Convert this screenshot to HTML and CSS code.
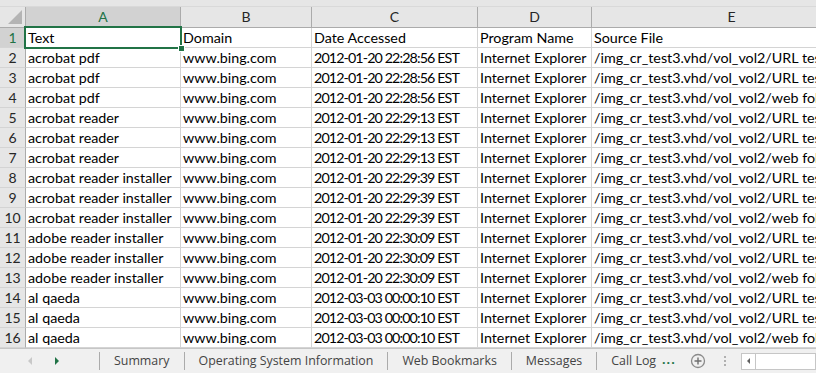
FILE: index.html
```html
<!DOCTYPE html>
<html lang="en">
<head>
  <meta charset="UTF-8">
  <title>URL history - sheet</title>
  <link rel="stylesheet" href="styles.css">
</head>
<body>

  <div class="sheet">
    <div class="row head">
      <div class="corner"><span class="tri"></span></div>
      <div class="colhead sel">A</div>
      <div class="colhead">B</div>
      <div class="colhead">C</div>
      <div class="colhead">D</div>
      <div class="colhead">E</div>
    </div>

    <div class="row">
      <div class="rowhead sel">1</div>
      <div class="cell active">Text<span class="selbox"></span><span class="handle"></span></div>
      <div class="cell">Domain</div>
      <div class="cell">Date Accessed</div>
      <div class="cell">Program Name</div>
      <div class="cell">Source File</div>
    </div>
    <div class="row">
      <div class="rowhead">2</div>
      <div class="cell">acrobat pdf</div>
      <div class="cell">www.bing.com</div>
      <div class="cell date">2012-01-20 22:28:56 EST</div>
      <div class="cell">Internet Explorer</div>
      <div class="cell">/img_cr_test3.vhd/vol_vol2/URL test.txt</div>
    </div>
    <div class="row">
      <div class="rowhead">3</div>
      <div class="cell">acrobat pdf</div>
      <div class="cell">www.bing.com</div>
      <div class="cell date">2012-01-20 22:28:56 EST</div>
      <div class="cell">Internet Explorer</div>
      <div class="cell">/img_cr_test3.vhd/vol_vol2/URL test.txt</div>
    </div>
    <div class="row">
      <div class="rowhead">4</div>
      <div class="cell">acrobat pdf</div>
      <div class="cell">www.bing.com</div>
      <div class="cell date">2012-01-20 22:28:56 EST</div>
      <div class="cell">Internet Explorer</div>
      <div class="cell">/img_cr_test3.vhd/vol_vol2/web folder</div>
    </div>
    <div class="row">
      <div class="rowhead">5</div>
      <div class="cell">acrobat reader</div>
      <div class="cell">www.bing.com</div>
      <div class="cell date">2012-01-20 22:29:13 EST</div>
      <div class="cell">Internet Explorer</div>
      <div class="cell">/img_cr_test3.vhd/vol_vol2/URL test.txt</div>
    </div>
    <div class="row">
      <div class="rowhead">6</div>
      <div class="cell">acrobat reader</div>
      <div class="cell">www.bing.com</div>
      <div class="cell date">2012-01-20 22:29:13 EST</div>
      <div class="cell">Internet Explorer</div>
      <div class="cell">/img_cr_test3.vhd/vol_vol2/URL test.txt</div>
    </div>
    <div class="row">
      <div class="rowhead">7</div>
      <div class="cell">acrobat reader</div>
      <div class="cell">www.bing.com</div>
      <div class="cell date">2012-01-20 22:29:13 EST</div>
      <div class="cell">Internet Explorer</div>
      <div class="cell">/img_cr_test3.vhd/vol_vol2/web folder</div>
    </div>
    <div class="row">
      <div class="rowhead">8</div>
      <div class="cell">acrobat reader installer</div>
      <div class="cell">www.bing.com</div>
      <div class="cell date">2012-01-20 22:29:39 EST</div>
      <div class="cell">Internet Explorer</div>
      <div class="cell">/img_cr_test3.vhd/vol_vol2/URL test.txt</div>
    </div>
    <div class="row">
      <div class="rowhead">9</div>
      <div class="cell">acrobat reader installer</div>
      <div class="cell">www.bing.com</div>
      <div class="cell date">2012-01-20 22:29:39 EST</div>
      <div class="cell">Internet Explorer</div>
      <div class="cell">/img_cr_test3.vhd/vol_vol2/URL test.txt</div>
    </div>
    <div class="row">
      <div class="rowhead">10</div>
      <div class="cell">acrobat reader installer</div>
      <div class="cell">www.bing.com</div>
      <div class="cell date">2012-01-20 22:29:39 EST</div>
      <div class="cell">Internet Explorer</div>
      <div class="cell">/img_cr_test3.vhd/vol_vol2/web folder</div>
    </div>
    <div class="row">
      <div class="rowhead">11</div>
      <div class="cell">adobe reader installer</div>
      <div class="cell">www.bing.com</div>
      <div class="cell date">2012-01-20 22:30:09 EST</div>
      <div class="cell">Internet Explorer</div>
      <div class="cell">/img_cr_test3.vhd/vol_vol2/URL test.txt</div>
    </div>
    <div class="row">
      <div class="rowhead">12</div>
      <div class="cell">adobe reader installer</div>
      <div class="cell">www.bing.com</div>
      <div class="cell date">2012-01-20 22:30:09 EST</div>
      <div class="cell">Internet Explorer</div>
      <div class="cell">/img_cr_test3.vhd/vol_vol2/URL test.txt</div>
    </div>
    <div class="row">
      <div class="rowhead">13</div>
      <div class="cell">adobe reader installer</div>
      <div class="cell">www.bing.com</div>
      <div class="cell date">2012-01-20 22:30:09 EST</div>
      <div class="cell">Internet Explorer</div>
      <div class="cell">/img_cr_test3.vhd/vol_vol2/web folder</div>
    </div>
    <div class="row">
      <div class="rowhead">14</div>
      <div class="cell">al qaeda</div>
      <div class="cell">www.bing.com</div>
      <div class="cell date">2012-03-03 00:00:10 EST</div>
      <div class="cell">Internet Explorer</div>
      <div class="cell">/img_cr_test3.vhd/vol_vol2/URL test.txt</div>
    </div>
    <div class="row">
      <div class="rowhead">15</div>
      <div class="cell">al qaeda</div>
      <div class="cell">www.bing.com</div>
      <div class="cell date">2012-03-03 00:00:10 EST</div>
      <div class="cell">Internet Explorer</div>
      <div class="cell">/img_cr_test3.vhd/vol_vol2/URL test.txt</div>
    </div>
    <div class="row">
      <div class="rowhead">16</div>
      <div class="cell">al qaeda</div>
      <div class="cell">www.bing.com</div>
      <div class="cell date">2012-03-03 00:00:10 EST</div>
      <div class="cell">Internet Explorer</div>
      <div class="cell">/img_cr_test3.vhd/vol_vol2/web folder</div>
    </div>
  </div>

  <div class="tabbar">
    <div class="nav">
      <span class="arrow left"></span>
      <span class="arrow right"></span>
    </div>
    <div class="tab">Summary</div>
    <div class="tab">Operating System Information</div>
    <div class="tab">Web Bookmarks</div>
    <div class="tab">Messages</div>
    <div class="tab last">Call Log</div>
    <span class="more">...</span>
    <svg class="add" width="16" height="16" viewBox="0 0 16 16">
      <circle cx="8" cy="8" r="6.5" fill="none" stroke="#8a8a8a" stroke-width="1.3"/>
      <path d="M8 4.5v7M4.5 8h7" stroke="#6f6f6f" stroke-width="1.4"/>
    </svg>
    <span class="grip"></span>
    <div class="hscroll">
      <span class="sarrow"></span>
    </div>
  </div>

</body>
</html>
```

FILE: styles.css
```css
body {
  margin: 0;
  background-color: #ffffff;
  font-family: 'Lato', 'Liberation Sans', sans-serif;
  overflow: hidden;
}
.sheet {
  width: 816px;
  height: 348px;
  padding-top: 7px;
  box-sizing: border-box;
  background-color: #e6e6e6;
  overflow: hidden;
}
.row {
  display: grid;
  grid-template-columns: 26px 155px 131px 166px 114px 280px;
  height: 20px;
  background-color: #ffffff;
}
.row.head {
  height: 21px;
  border-top: 1px solid #d9d9d9;
  margin-top: -1px;
  background-color: #e6e6e6;
}

/* headers */
.corner {
  position: relative;
  border-right: 1px solid #ababab;
  border-bottom: 1px solid #ababab;
}
.tri {
  position: absolute;
  right: 3px;
  bottom: 3px;
  width: 0;
  height: 0;
  border-left: 14px solid transparent;
  border-bottom: 14px solid #b4b4b4;
}
.colhead {
  font-size: 14px;
  color: #262626;
  text-align: center;
  line-height: 20px;
  border-right: 1px solid #ababab;
  border-bottom: 1px solid #ababab;
}
.colhead.sel {
  background-color: #d2d2d2;
  color: #217346;
  border-bottom: 1px solid #217346;
}
.rowhead {
  font-size: 14px;
  color: #262626;
  text-align: center;
  line-height: 19px;
  background-color: #e6e6e6;
  border-right: 1px solid #ababab;
  border-bottom: 1px solid #d4d4d4;
}
.rowhead.sel {
  background-color: #d2d2d2;
  color: #217346;
  border-right-color: #217346;
}

/* cells */
.cell {
  font-size: 14.3px;
  color: #000000;
  line-height: 19px;
  padding-left: 2px;
  white-space: nowrap;
  overflow: hidden;
  border-right: 1px solid #d4d4d4;
  border-bottom: 1px solid #d4d4d4;
}
.cell.date {
  letter-spacing: -0.9px;
}
.cell.active {
  position: relative;
  overflow: visible;
}
.selbox {
  position: absolute;
  left: -2px;
  top: -2px;
  width: 154px;
  height: 19px;
  border: 2px solid #217346;
}
.handle {
  position: absolute;
  left: 152px;
  top: 17px;
  width: 5px;
  height: 5px;
  background-color: #217346;
  border: 1px solid #ffffff;
  z-index: 2;
}

/* sheet tabs */
.tabbar {
  height: 25px;
  display: flex;
  align-items: center;
  background-color: #f0f0f0;
  border-top: 1px solid #c6c6c6;
  box-sizing: border-box;
  font-family: 'Open Sans', 'Liberation Sans', sans-serif;
  font-size: 12.4px;
  color: #444444;
}
.nav {
  width: 100px;
  display: flex;
  gap: 23px;
  padding-left: 28px;
  box-sizing: border-box;
  border-right: 1px solid #ababab;
  height: 18px;
  align-items: center;
}
.arrow {
  width: 0;
  height: 0;
  border-top: 4px solid transparent;
  border-bottom: 4px solid transparent;
}
.arrow.left {
  border-right: 4px solid #c8c8c8;
}
.arrow.right {
  border-left: 4px solid #217346;
}
.tab {
  padding: 0 14px;
  height: 18px;
  line-height: 18px;
  border-right: 1px solid #ababab;
  white-space: nowrap;
}
.tab.last {
  border-right: 0;
  padding-right: 6px;
}
.more {
  color: #217346;
  font-weight: bold;
  letter-spacing: 1px;
  margin-top: -4px;
}
.add {
  margin-left: 14px;
}
.grip {
  width: 2px;
  height: 12px;
  margin-left: 18px;
  background-image: radial-gradient(circle, #b0b0b0 1px, transparent 1px);
  background-size: 2px 4px;
}
.hscroll {
  margin-left: 15px;
  flex: 1;
  height: 15px;
  background-color: #ffffff;
  border: 1px solid #c6c6c6;
  display: flex;
  align-items: center;
}
.sarrow {
  width: 14px;
  height: 15px;
  box-sizing: border-box;
  border-right: 1px solid #c6c6c6;
  position: relative;
}
.sarrow::after {
  content: "";
  position: absolute;
  left: 5px;
  top: 4px;
  border-top: 3px solid transparent;
  border-bottom: 3px solid transparent;
  border-right: 3px solid #606060;
}
```
